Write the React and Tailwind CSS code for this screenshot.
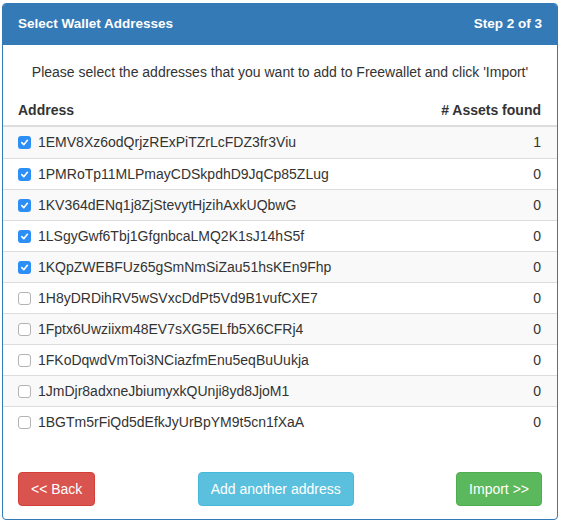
import React from "react";

const rows = [
  ["1EMV8Xz6odQrjzRExPiTZrLcFDZ3fr3Viu", "1", true],
  ["1PMRoTp11MLPmayCDSkpdhD9JqCp85ZLug", "0", true],
  ["1KV364dENq1j8ZjStevytHjzihAxkUQbwG", "0", true],
  ["1LSgyGwf6Tbj1GfgnbcaLMQ2K1sJ14hS5f", "0", true],
  ["1KQpZWEBFUz65gSmNmSiZau51hsKEn9Fhp", "0", true],
  ["1H8yDRDihRV5wSVxcDdPt5Vd9B1vufCXE7", "0", false],
  ["1Fptx6Uwziixm48EV7sXG5ELfb5X6CFRj4", "0", false],
  ["1FKoDqwdVmToi3NCiazfmEnu5eqBuUukja", "0", false],
  ["1JmDjr8adxneJbiumyxkQUnji8yd8JjoM1", "0", false],
  ["1BGTm5rFiQd5dEfkJyUrBpYM9t5cn1fXaA", "0", false],
];

function Box({ checked }) {
  if (checked) {
    return (
      <span className="inline-flex items-center justify-center w-[13px] h-[13px] rounded-[3px] bg-[#2d8ef5] mr-[7px] shrink-0">
        <svg width="9" height="9" viewBox="0 0 10 10">
          <path d="M2 5.2 L4.2 7.4 L8.2 2.6" fill="none" stroke="white" strokeWidth="1.8" strokeLinecap="round" strokeLinejoin="round" />
        </svg>
      </span>
    );
  }
  return (
    <span className="inline-block w-[13px] h-[13px] rounded-[3px] bg-white border border-[#b3b3b3] mr-[7px] shrink-0" />
  );
}

export default function App() {
  return (
    <div className="w-[561px] h-[525px] bg-white pt-[3px] pl-[2px]" style={{ fontFamily: '"Liberation Sans", Arial, sans-serif' }}>
      <div className="w-[556px] h-[517px] border border-[#337ab7] rounded-[4px] flex flex-col overflow-hidden text-[#333]">
        <div className="h-[41px] bg-[#337ab7] border-b border-[#337ab7] flex items-center justify-between px-[15px] text-white font-bold text-[13.5px]">
          <span>Select Wallet Addresses</span>
          <span>Step 2 of 3</span>
        </div>
        <p className="text-center text-[14px] leading-[20px] pt-[17px] mb-[13px]">
          Please select the addresses that you want to add to Freewallet and click 'Import'
        </p>
        <div className="flex justify-between items-center h-[32px] px-[15px] border-b-2 border-[#ddd] font-bold text-[14px]">
          <span>Address</span>
          <span className="pr-[1px]">{"# Assets found"}</span>
        </div>
        {rows.map(([addr, n, c], i) => (
          <div
            key={addr}
            className={
              "flex items-center h-[31px] px-[15px] text-[14px] " +
              (i > 0 ? "border-t border-[#ddd] " : "") +
              (i % 2 === 0 ? "bg-[#f9f9f9]" : "bg-white")
            }
          >
            <Box checked={c} />
            <span className="flex-1">{addr}</span>
            <span className="pr-[1px]">{n}</span>
          </div>
        ))}
        <div className="flex justify-between items-center px-[15px] mt-[35px]">
          <button className="h-[34px] px-[12px] rounded-[4px] bg-[#d9534f] border border-[#d43f3a] text-white text-[14px]">
            {"<< Back"}
          </button>
          <button className="h-[34px] px-[12px] rounded-[4px] bg-[#5bc0de] border border-[#46b8da] text-white text-[14px]">
            Add another address
          </button>
          <button className="h-[34px] px-[12px] rounded-[4px] bg-[#5cb85c] border border-[#4cae4c] text-white text-[14px]">
            {"Import >>"}
          </button>
        </div>
      </div>
    </div>
  );
}
